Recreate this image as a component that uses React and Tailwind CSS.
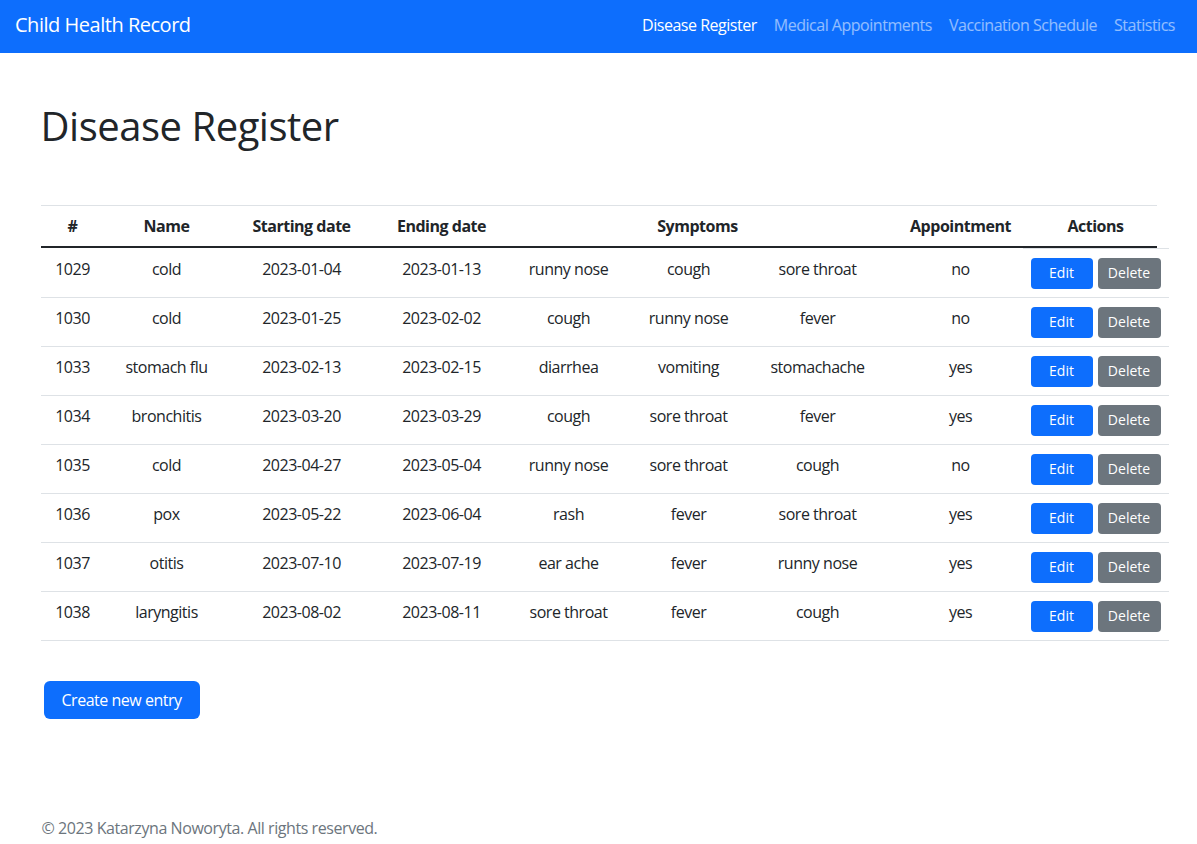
import React from 'react';

const rows = [
  { id: 1029, name: 'cold', start: '2023-01-04', end: '2023-01-13', s: ['runny nose', 'cough', 'sore throat'], appt: 'no' },
  { id: 1030, name: 'cold', start: '2023-01-25', end: '2023-02-02', s: ['cough', 'runny nose', 'fever'], appt: 'no' },
  { id: 1033, name: 'stomach flu', start: '2023-02-13', end: '2023-02-15', s: ['diarrhea', 'vomiting', 'stomachache'], appt: 'yes' },
  { id: 1034, name: 'bronchitis', start: '2023-03-20', end: '2023-03-29', s: ['cough', 'sore throat', 'fever'], appt: 'yes' },
  { id: 1035, name: 'cold', start: '2023-04-27', end: '2023-05-04', s: ['runny nose', 'sore throat', 'cough'], appt: 'no' },
  { id: 1036, name: 'pox', start: '2023-05-22', end: '2023-06-04', s: ['rash', 'fever', 'sore throat'], appt: 'yes' },
  { id: 1037, name: 'otitis', start: '2023-07-10', end: '2023-07-19', s: ['ear ache', 'fever', 'runny nose'], appt: 'yes' },
  { id: 1038, name: 'laryngitis', start: '2023-08-02', end: '2023-08-11', s: ['sore throat', 'fever', 'cough'], appt: 'yes' },
];

const links = ['Disease Register', 'Medical Appointments', 'Vaccination Schedule', 'Statistics'];

export default function App() {
  return (
    <div className="min-h-[844px] bg-white text-[#212529] font-['Open_Sans',sans-serif] tracking-[-0.03em] flex flex-col">
      {/* NAVBAR */}
      <nav className="h-[53px] bg-[#0d6efd] flex items-center justify-between pl-[15px] pr-[14px] pb-[3px]">
        <span className="text-[20px] text-white leading-[30px]">Child Health Record</span>
        <div className="flex items-center gap-[1px]">
          {links.map((l, i) => (
            <span key={l} className={`px-2 text-[16px] leading-6 ${i === 0 ? 'text-white' : 'text-white/55'}`}>{l}</span>
          ))}
        </div>
      </nav>

      {/* MAIN */}
      <main className="w-[1116px] mx-auto flex-1">
        <h1 className="mt-[49px] mb-[55px] text-[40px] leading-[48px] font-medium">Disease Register</h1>

        {/* TABLE HEADER */}
        <div className="w-[1116px] flex border-t border-[#dee2e6] border-b-2 border-b-[#212529] font-bold text-[16px] leading-6 text-center">
          <div className="w-[64px] py-2">#</div>
          <div className="w-[124px] py-2">Name</div>
          <div className="w-[146px] py-2">Starting date</div>
          <div className="w-[134px] py-2">Ending date</div>
          <div className="w-[378px] py-2">Symptoms</div>
          <div className="w-[148px] py-2">Appointment</div>
          <div className="w-[122px] py-2">Actions</div>
        </div>

        {/* TABLE BODY */}
        <div className="w-[1128px]">
          <div className="ml-[982px] w-[146px] border-t border-[#dee2e6]" />
          {rows.map((r) => (
            <div key={r.id} className="flex text-[16px] leading-6 text-center">
              <div className="w-[982px] h-[49px] flex border-b border-[#dee2e6] pt-[8px]">
                <div className="w-[64px]">{r.id}</div>
                <div className="w-[124px]">{r.name}</div>
                <div className="w-[146px]">{r.start}</div>
                <div className="w-[134px]">{r.end}</div>
                <div className="w-[120px]">{r.s[0]}</div>
                <div className="w-[120px]">{r.s[1]}</div>
                <div className="w-[138px]">{r.s[2]}</div>
                <div className="w-[136px] pl-[12px]">{r.appt}</div>
              </div>
              <div className="w-[146px] h-[49px] border-b border-[#dee2e6] flex items-center gap-[5px] px-2">
                <button className="w-[62px] h-[31px] rounded-[4px] bg-[#0d6efd] text-white text-[14px] tracking-normal">Edit</button>
                <button className="w-[63px] h-[31px] rounded-[4px] bg-[#6c757d] text-white text-[14px] tracking-normal">Delete</button>
              </div>
            </div>
          ))}
        </div>

        <button className="mt-[40px] ml-[3px] h-[38px] w-[156px] rounded-[6px] bg-[#0d6efd] text-white text-[16px]">Create new entry</button>
      </main>

      {/* FOOTER */}
      <footer className="w-[1116px] mx-auto pl-[1px] mb-[4px] text-[16px] leading-6 text-[#6c757d] tracking-[-0.027em]">
        © 2023 Katarzyna Noworyta. All rights reserved.
      </footer>
    </div>
  );
}
